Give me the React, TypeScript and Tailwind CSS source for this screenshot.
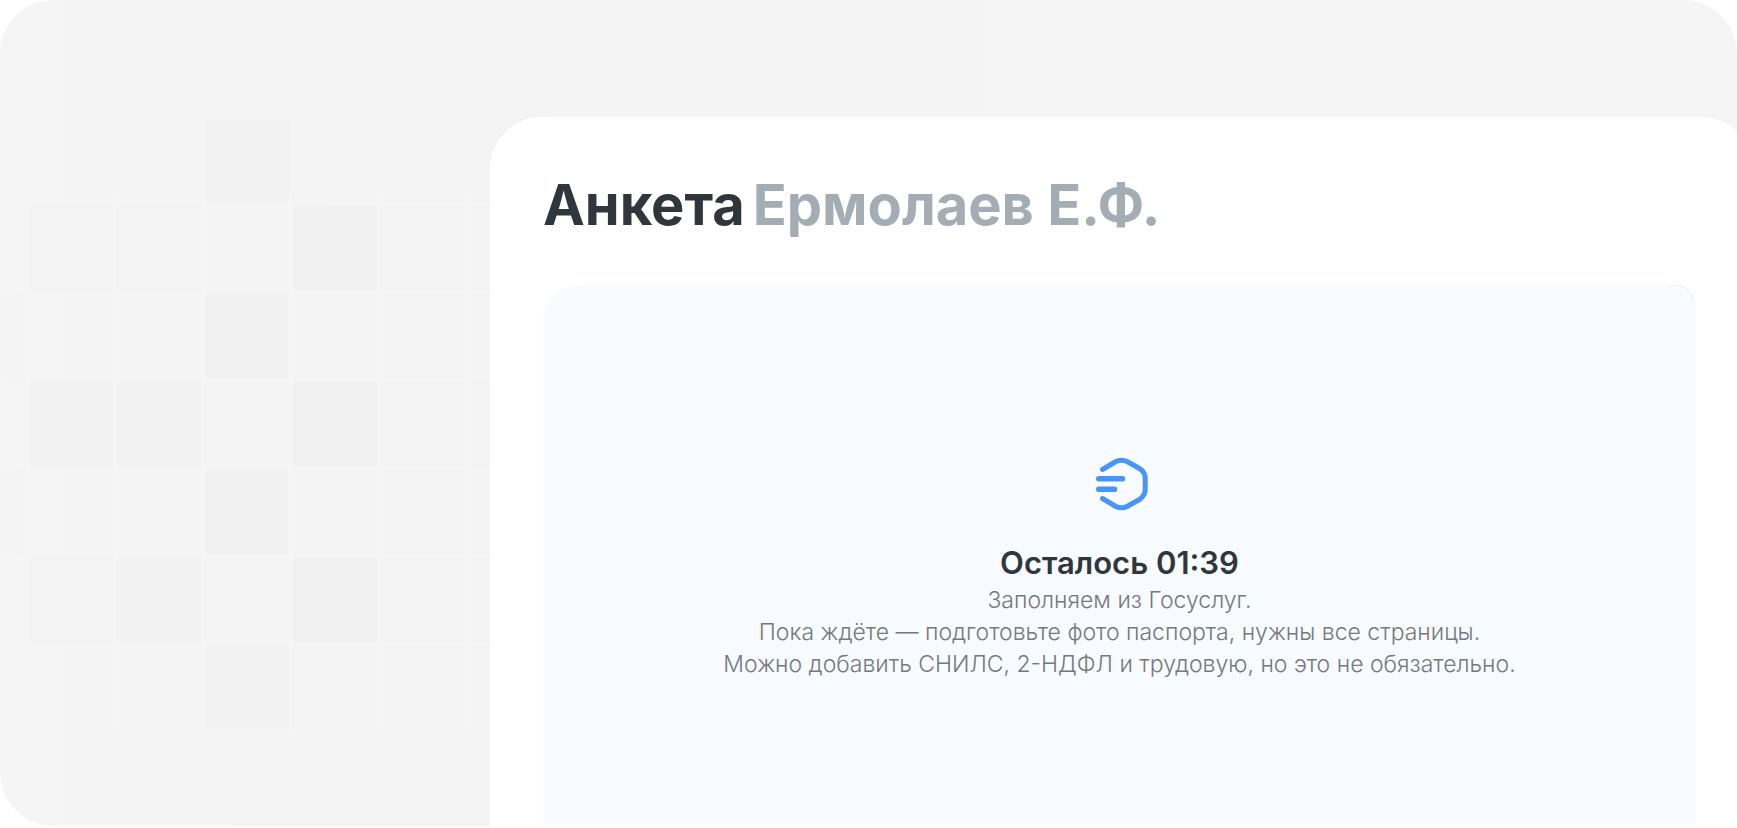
import React from "react";

type Tile = { col: number; row: number; fill: string };

// background tiles, 84px squares on an 88px grid
const tiles: Tile[] = [
  { col: 4, row: 0, fill: "#f4f4f4" },
  { col: 3, row: 1, fill: "#f2f2f2" },
  { col: 1, row: 2, fill: "#f3f3f3" },
  { col: 2, row: 2, fill: "#f3f3f3" },
  { col: 4, row: 2, fill: "#f1f1f1" },
  { col: 0, row: 3, fill: "#f4f4f4" },
  { col: 3, row: 3, fill: "#f1f1f1" },
  { col: 1, row: 4, fill: "#f2f2f2" },
  { col: 2, row: 4, fill: "#f2f2f2" },
  { col: 4, row: 4, fill: "#f0f0f0" },
  { col: 6, row: 4, fill: "#f3f3f3" },
  { col: 0, row: 5, fill: "#f4f4f4" },
  { col: 3, row: 5, fill: "#f1f1f1" },
  { col: 1, row: 6, fill: "#f3f3f3" },
  { col: 2, row: 6, fill: "#f2f2f2" },
  { col: 4, row: 6, fill: "#f0f0f0" },
  { col: 3, row: 7, fill: "#f2f2f2" },
  { col: 2, row: 8, fill: "#f4f4f4" },
  { col: 4, row: 8, fill: "#f3f3f3" },
];

const Backdrop: React.FC = () => {
  return (
    <svg className="absolute inset-0 h-full w-full" aria-hidden="true">
      <defs>
        <linearGradient id="fade" x1="0" x2="1" y1="0" y2="0">
          <stop offset="0" stopColor="#f5f5f5" />
          <stop offset="0.2" stopColor="#f4f4f4" />
          <stop offset="0.65" stopColor="#f5f5f5" />
        </linearGradient>
        <pattern
          id="grid"
          x="22"
          y="20"
          width="88"
          height="88"
          patternUnits="userSpaceOnUse"
        >
          <path d="M0 8H88M4 0V88" stroke="#f5f5f5" strokeWidth="3" />
          <circle cx="4" cy="8" r="3" fill="#f7f7f7" />
        </pattern>
      </defs>
      <rect width="100%" height="100%" fill="url(#fade)" />
      <rect y="190" width="500" height="540" fill="url(#grid)" />
      {tiles.map(({ col, row, fill }) => (
        <rect
          key={`${col}-${row}`}
          x={col * 88 - 59}
          y={row * 88 + 30}
          width="84"
          height="84"
          rx="3"
          fill={fill}
        />
      ))}
    </svg>
  );
};

const Logo: React.FC = () => {
  return (
    <svg
      className="overflow-visible"
      width="54"
      height="54"
      viewBox="0 0 54 54"
      fill="none"
      stroke="#4796f7"
      strokeWidth="5"
      strokeLinecap="round"
      aria-hidden="true"
    >
      <path d="M9.5 12.5 L22.5 4.8 Q28.5 1.6 34.5 4.8 L46 11.2 Q52.2 15.3 52.2 21 V33 Q52.2 38.7 46 42.8 L34.5 49.2 Q28.5 52.4 22.5 49.2 L9.5 41.5" />
      <path
        d="M5.8 21.7 H29.5 M5.8 32.2 H21.5"
        strokeWidth="5.6"
      />
    </svg>
  );
};

const App: React.FC = () => {
  return (
    <main
      lang="ru"
      className="min-h-screen overflow-hidden bg-white font-['Inter',sans-serif]"
    >
      <section className="relative flex min-h-[calc(100vh-2px)] flex-col overflow-hidden rounded-[54px] rounded-br-none pt-[117px] pl-[490px]">
        <Backdrop />

        {/* Form card */}
        <div className="relative -mr-4 flex flex-1 flex-col rounded-t-[52px] bg-white pt-[52px] pr-[57px] pb-[1px] pl-[53px]">
          <h1 className="flex gap-2 text-[56px] leading-[72px] font-bold whitespace-nowrap text-[#2f373d]">
            Анкета
            <span className="text-[#a4adb3]">Ермолаев Е.Ф.</span>
          </h1>

          {/* Loading panel */}
          <div className="relative mt-11 flex flex-1 flex-col items-center rounded-tl-[36px] rounded-tr-[20px] bg-[#f8fbff] pt-[172px] text-center">
            <div className="absolute top-0 right-[3px] h-5 w-6 rounded-tr-[16px] border-t border-r border-[#eff1f2]" />
            <Logo />
            <h2 className="mt-[31px] text-[31px] leading-[42px] font-semibold text-[#2f373d]">
              Осталось 01:39
            </h2>
            <p className="text-[23px] leading-8 font-light text-[#74797d]">
              Заполняем из Госуслуг.
              <br />
              Пока ждёте — подготовьте фото паспорта, нужны все страницы.
              <br />
              Можно добавить СНИЛС, 2-НДФЛ и трудовую, но это не обязательно.
            </p>
          </div>
        </div>
      </section>
    </main>
  );
};

export default App;
